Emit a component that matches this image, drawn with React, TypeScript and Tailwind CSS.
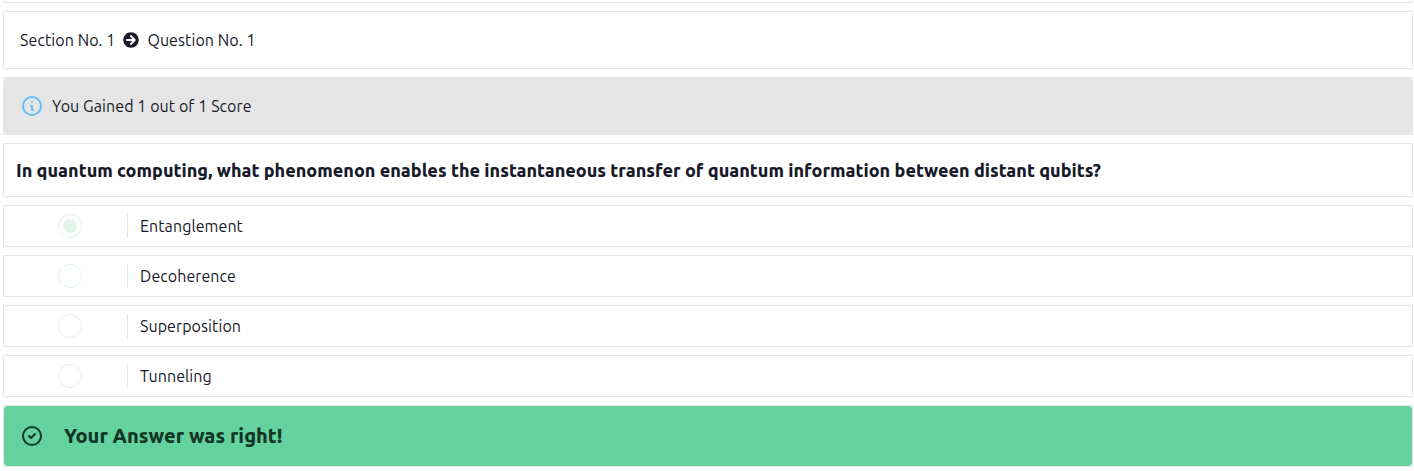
import { FaArrowCircleRight } from "react-icons/fa";
import type { ReactNode } from "react";

const options = [
  { label: "Entanglement", selected: true },
  { label: "Decoherence", selected: false },
  { label: "Superposition", selected: false },
  { label: "Tunneling", selected: false },
];

function Panel({ className, children }: { className: string; children?: ReactNode }) {
  return <div className={`flex items-center border border-[#e5e6e8] ${className}`}>{children}</div>;
}

function StatusIcon({ d, className }: { d: string; className: string }) {
  return (
    <svg viewBox="0 0 24 24" fill="none" stroke="currentColor" strokeWidth={2} strokeLinecap="round" strokeLinejoin="round" className={`size-6 shrink-0 ${className}`}>
      <path d={d} />
    </svg>
  );
}

export default function App() {
  return (
    <main className="flex h-[471px] flex-col gap-2 overflow-hidden bg-white pl-[3px] pr-px font-[Ubuntu,'Noto_Sans',sans-serif] text-base tracking-[0.08px] text-[#181a2a]">
      <Panel className="h-[3px] shrink-0 border-t-0" />
      <Panel className="h-[58px] shrink-0 px-4">
        <span className="whitespace-nowrap">Section No. 1</span>
        <FaArrowCircleRight className="mx-2 size-4 shrink-0" />
        <span className="whitespace-nowrap">Question No. 1</span>
      </Panel>
      <Panel className="h-[58px] shrink-0">
        <div className="flex h-full w-full items-center gap-2 rounded bg-[#e5e5e5] px-4">
          <StatusIcon className="text-[#66bdf8]" d="M13 16h-1v-4h-1m1-4h.01M21 12a9 9 0 11-18 0 9 9 0 0118 0z" />
          <span className="whitespace-nowrap">You Gained 1 out of 1 Score</span>
        </div>
      </Panel>
      <Panel className="h-[54px] shrink-0 px-3">
        <h1 className="whitespace-nowrap text-lg font-extrabold tracking-normal">
          In quantum computing, what phenomenon enables the instantaneous transfer of quantum information between distant qubits?
        </h1>
      </Panel>
      {options.map((o) => (
        <Panel key={o.label} className="h-[42px] shrink-0">
          <div className="flex w-[123px] pl-[54px]">
            <span className="flex size-6 items-center justify-center rounded-full border border-[#e3f3eb]">
              {o.selected && <span className="size-[14px] rounded-full bg-[#e3f4eb]" />}
            </span>
          </div>
          <div className="h-6 border-l border-[#e5e6e8] pl-3">
            <span className="whitespace-nowrap">{o.label}</span>
          </div>
        </Panel>
      ))}
      <Panel className="h-[62px] shrink-0">
        <div className="flex h-full w-full items-center gap-5 rounded bg-[#63d29e] px-4 text-[#123524]">
          <StatusIcon className="" d="M9 12l2 2 4-4m6 2a9 9 0 11-18 0 9 9 0 0118 0z" />
          <strong className="whitespace-nowrap text-xl font-extrabold tracking-normal">Your Answer was right!</strong>
        </div>
      </Panel>
    </main>
  );
}
